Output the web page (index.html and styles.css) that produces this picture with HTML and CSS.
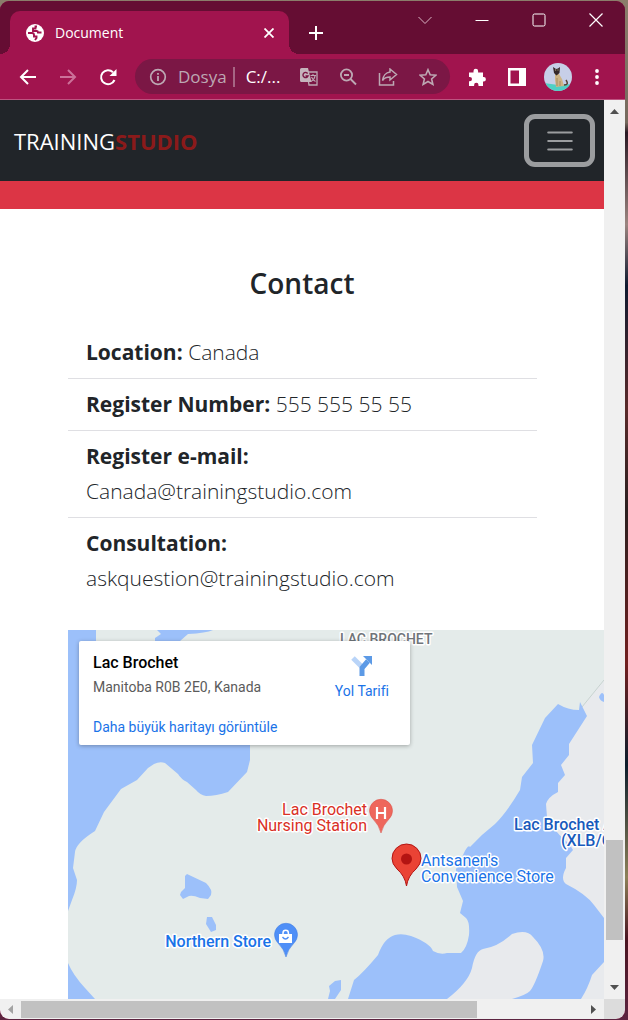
FILE: index.html
```html
<!DOCTYPE html>
<html lang="tr">
<head>
<meta charset="utf-8">
<meta name="viewport" content="width=device-width, initial-scale=1">
<title>Document</title>
<link rel="stylesheet" href="styles.css">
</head>
<body>
<div class="window">
  <div class="tabstrip">
    <div class="tab">
      <svg class="favicon" width="18" height="18" viewBox="0 0 18 18"><circle cx="9" cy="9" r="9" fill="#fff"/><path d="M11 2.500H9.500V4.500H7V7h3.500q1.500 0 1.500 1.500h3.500M2 9h4q2 0 2 2v1.500h2.500V14L9 16" fill="none" stroke="#a1144e" stroke-width="1.900"/></svg>
      <span class="tab-title">Document</span>
      <button class="icon-btn tab-close" aria-label="Close tab"><svg width="10" height="10" viewBox="0 0 10 10"><path d="M0.500 0.500l9 9m0-9l-9 9" stroke="#fff" stroke-width="1.800"/></svg></button>
    </div>
    <button class="icon-btn new-tab" aria-label="New tab"><svg width="14" height="14" viewBox="0 0 14 14"><path d="M7 0v14M0 7h14" stroke="#fff" stroke-width="2"/></svg></button>
    <div class="window-buttons">
      <button class="icon-btn" aria-label="Search tabs"><svg width="14" height="14" viewBox="0 0 14 14"><path d="M0.500 4l6.500 6.500L13.500 4" fill="none" stroke="#d9b5c4"/></svg></button>
      <button class="icon-btn" aria-label="Minimize"><svg width="14" height="14" viewBox="0 0 14 14"><path d="M0.500 7.500h13" stroke="#fff"/></svg></button>
      <button class="icon-btn" aria-label="Maximize"><svg width="14" height="14" viewBox="0 0 14 14"><rect x="1" y="1" width="12" height="12" rx="1.500" fill="none" stroke="#fff"/></svg></button>
      <button class="icon-btn" aria-label="Close"><svg width="14" height="14" viewBox="0 0 14 14"><path d="M0.500 0.500l13 13m0-13l-13 13" stroke="#fff" stroke-width="1.200"/></svg></button>
    </div>
  </div>
  <div class="toolbar">
    <div class="nav-buttons">
      <button class="icon-btn" aria-label="Back"><svg width="18" height="18" viewBox="0 0 18 18"><path d="M17 9H2M9 2L2 9l7 7" fill="none" stroke="#fff" stroke-width="2"/></svg></button>
      <button class="icon-btn" aria-label="Forward"><svg width="18" height="18" viewBox="0 0 18 18"><path d="M1 9h15M9 2l7 7-7 7" fill="none" stroke="#cc7199" stroke-width="2"/></svg></button>
      <button class="icon-btn" aria-label="Reload"><svg width="18" height="18" viewBox="0 0 18 18"><path d="M15.500 12A7 7 0 1 1 14 4.200" fill="none" stroke="#fff" stroke-width="2"/><path d="M17.500 1v7h-7z" fill="#fff"/></svg></button>
    </div>
    <div class="omnibox">
      <svg width="18" height="18" viewBox="0 0 18 18"><circle cx="9" cy="9" r="7.300" fill="none" stroke="#bda8b3" stroke-width="1.700"/><path d="M9 8v5M9 5v1.800" stroke="#bda8b3" stroke-width="1.800"/></svg>
      <label for="address">Dosya</label>
      <input id="address" type="text" value="C:/...">
      <div class="page-actions">
        <button class="icon-btn" aria-label="Translate"><svg width="18" height="18" viewBox="0 0 18 18"><path d="M7 4h10v13H9z" fill="none" stroke="#bda8b3" stroke-width="1.300"/><path d="M1.500 0H8l3.500 14H1.500A1.500 1.500 0 0 1 0 12.500v-11A1.500 1.500 0 0 1 1.500 0z" fill="#c5b3bc"/><path d="M7.700 5.500A2.600 2.600 0 1 0 8 8H5.500" fill="none" stroke="#7b1745" stroke-width="1.400"/><path d="M10.500 7.500h5.500M13 6v1.500M15 8c-.5 3-2 4.500-4 5.500M11.500 9c1 2.500 2 3.500 4 4.500" fill="none" stroke="#bda8b3" stroke-width="1.100"/></svg></button>
        <button class="icon-btn" aria-label="Zoom"><svg width="18" height="18" viewBox="0 0 18 18"><circle cx="7.500" cy="7" r="5.600" fill="none" stroke="#bda8b3" stroke-width="1.800"/><path d="M11.500 11l5.500 5.500M5 7h5" stroke="#bda8b3" stroke-width="1.900"/></svg></button>
        <button class="icon-btn" aria-label="Share"><svg width="20" height="18" viewBox="0 0 20 18"><path d="M1.500 5v12h14v-4M12 1l6.500 5.500L12 12V9c-3.500 0-6 1-7.500 3.500C5 8 8 4.500 12 4z" fill="none" stroke="#bda8b3" stroke-width="1.500"/></svg></button>
        <button class="icon-btn" aria-label="Bookmark"><svg width="18" height="18" viewBox="0 0 18 18"><path d="M9 1.700l2.200 5.100 5.600.5-4.200 3.700 1.300 5.400L9 13.500l-4.900 2.900L5.400 11 1.200 7.300l5.600-.5z" fill="none" stroke="#bda8b3" stroke-width="1.600"/></svg></button>
      </div>
    </div>
    <div class="extensions">
      <button class="icon-btn puzzle" aria-label="Extensions"><svg width="18" height="18" viewBox="0 0 18 18"><path d="M1 4.500h4.500V3a2.300 2.300 0 0 1 4.600 0v1.500H15V9h.7a2.200 2.200 0 0 1 0 4.400H15V18h-4.500v-1a2.200 2.200 0 0 0-4.400 0v1H1v-4.700h.8a2.200 2.200 0 0 0 0-4.400H1z" fill="#fff"/></svg></button>
      <button class="icon-btn" aria-label="Side panel"><svg width="18" height="18" viewBox="0 0 18 18"><path d="M0 0h18v18H0zM2.500 2.500v13H11v-13z" fill="#fff" fill-rule="evenodd"/></svg></button>
      <button class="icon-btn" aria-label="Profile"><svg width="28" height="28" viewBox="0 0 28 28"><defs><clipPath id="avatar"><circle cx="14" cy="14" r="14"/></clipPath></defs><g clip-path="url(#avatar)"><path d="M0 0h28v28H0z" fill="#c7cfe8"/><path d="M0 20l14 2 14-1v7H0z" fill="#4fd0c4"/><path d="M11 10l4 1 3 5 2 7-8 1-1-7z" fill="#cdb486"/><path d="M20 22c4 0 4-2 2-5" fill="none" stroke="#574236" stroke-width="1.500"/><path d="M13 15v8M16 18v5" stroke="#aa8c60"/><path d="M9 4l3 2 2-.5L16 4l-.5 6-3 2.500L10 10z" fill="#34282a"/><path d="M11 7h1.200M13.500 7h1" stroke="#c0b48a"/></g></svg></button>
      <button class="icon-btn" aria-label="Menu"><svg width="14" height="18" viewBox="0 0 14 18" fill="#fff"><circle cx="7" cy="3" r="1.900"/><circle cx="7" cy="9" r="1.900"/><circle cx="7" cy="15" r="1.900"/></svg></button>
    </div>
  </div>

  <div class="viewport">
    <div class="page">
      <header class="navbar">
        <a class="brand" href="#">TRAINING<b>STUDIO</b></a>
        <button class="toggler" aria-label="Toggle navigation"><svg width="32" height="32" viewBox="0 0 30 30"><path d="M4 7h22M4 15h22M4 23h22" stroke="#9b9d9f" stroke-width="2" stroke-linecap="round"/></svg></button>
      </header>
      <div class="red-band"></div>
      <main class="contact">
        <h1>Contact</h1>
        <ul class="details">
          <li><b>Location:</b> Canada</li>
          <li><b>Register Number:</b> 555 555 55 55</li>
          <li><b>Register e-mail:</b><br>Canada@trainingstudio.com</li>
          <li><b>Consultation:</b><br>askquestion@trainingstudio.com</li>
        </ul>
        <section class="map" aria-label="Lac Brochet">
          <svg class="map-canvas" viewBox="68 630 536 369" preserveAspectRatio="xMinYMin slice">
            <path class="land" d="M68 630h536v369H68z"/>
            <path class="town" d="M604 680L582 707 540 790 440 999H604z"/>
            <path d="M604 680L582 707" stroke="#c8d3d0" fill="none"/>
            <g class="water">
              <path d="M68 630H96V645H250V760L247 772 228 792 Q216 796 206 796 Q200 795 196 790 L187 782 Q181 779 178 774 L165 763Q160 761 154 764L148 768 137 780 121 789 104 812 95 831Q76 843 75 852L73 868 77 880Q77 888 72 900L68 911z"/>
              <path d="M157 630H213Q206 633 188 634L180 641H155L155 638 161 634z"/>
              <path d="M68 963Q73 975 85 988L95 999H68z"/>
              <path d="M185 876L187 874 206 883Q213 890 211 895L208 899 200 898Q193 895 189 896L183 899 180 895 181 892 185 888z"/>
              <path d="M207 917H212L216 925V930L211 932 206 924z"/>
              <path d="M328 999L330 991 329 986 335 981 341 980V990L335 999z"/>
              <path d="M558 704Q568 710 579 710L580 702 587 716 569 744V755L561 765 565 775 558 783V792Q548 797 546 804L547 817Q553 830 565 840Q570 844 573 850L566 858V868Q560 879 566 884Q586 894 594 905L604 918V962L592 975Q588 988 581 999H348L354 980Q363 973 378 955Q384 938 395 935Q402 933 411 936Q430 943 433 951Q440 955 447 953H461Q467 948 469 935Q470 922 466 918L460 913 463 901 457 887 456 869 463 855Q468 844 470 847Q482 834 495 824Q507 812 520 790L522 777 533 763 532 745 545 718z"/>
              <path d="M599 697Q602 690 604 695V702Q600 701 599 697z"/>
            </g>
            <path class="town" d="M447 999Q468 983 472 968Q475 951 483 949Q498 947 512 934Q527 929 533 937Q546 950 543 961Q535 985 530 991Q526 995 512 999z"/>
            <g class="labels">
              <text class="region" x="340" y="644">LAC BROCHET</text>
              <text class="health" x="367" y="815" text-anchor="end">Lac Brochet</text>
              <text class="health" x="367" y="831" text-anchor="end">Nursing Station</text>
              <text class="shop" x="421" y="866">Antsanen's</text>
              <text class="shop" x="421" y="882">Convenience Store</text>
              <text class="shop strong" x="271" y="947" text-anchor="end">Northern Store</text>
              <text class="airport strong" x="514" y="830">Lac Brochet A</text>
              <text class="airport strong" x="561" y="846">(XLB/C</text>
            </g>
            <path d="M381 833Q379 825 373 819A11.500 11.500 0 1 1 389 819Q383 825 381 833z" fill="#ee675c" stroke="#d94b43" stroke-width=".5"/>
            <path d="M377 807v12M385 807v12M377 813h8" stroke="#fff" stroke-width="2.200"/>
            <path d="M286 957Q284 949 278 943A11.500 11.500 0 1 1 294 943Q288 949 286 957z" fill="#4f8ff7" stroke="#3a78e0" stroke-width=".5"/>
            <path d="M279 934h13v9h-13z" fill="#fff"/><path d="M283 934v-1a2.700 2.700 0 0 1 5.400 0v1" fill="none" stroke="#fff" stroke-width="1.500"/><path d="M282.500 937q3 4 6 0" fill="none" stroke="#4f8ff7" stroke-width="1.300"/>
            <path d="M406.500 886Q405 876 397 869Q392 864 392 858.500A14.500 14.500 0 0 1 421 858.500Q421 864 416 869Q408 876 406.500 886z" fill="#ea4335" stroke="#b31412"/>
            <circle cx="406.500" cy="859" r="5.500" fill="#b31412"/>
          </svg>
          <div class="place-card">
            <div class="place">
              <strong>Lac Brochet</strong>
              <span>Manitoba R0B 2E0, Kanada</span>
              <a href="#">Daha büyük haritayı görüntüle</a>
            </div>
            <a class="directions" href="#">
              <svg width="22" height="22" viewBox="0 0 22 22"><path d="M2 3l8 8" stroke="#b9d4f8" stroke-width="5"/><path d="M11 21v-8l6-7" fill="none" stroke="#5c9ae6" stroke-width="5"/><path d="M12 1h9v9z" fill="#5c9ae6"/></svg>
              Yol Tarifi
            </a>
          </div>
        </section>
      </main>
    </div>
    <div class="scrollbar vertical">
      <svg width="9" height="5" viewBox="0 0 9 5"><path d="M0 5L4.500 0 9 5z" fill="#505050"/></svg>
      <div class="track"><div class="thumb"></div></div>
      <svg width="9" height="5" viewBox="0 0 9 5"><path d="M0 0L4.500 5 9 0z" fill="#505050"/></svg>
    </div>
    <div class="scrollbar horizontal">
      <svg width="5" height="9" viewBox="0 0 5 9"><path d="M5 0L0 4.500 5 9z" fill="#a3a3a3"/></svg>
      <div class="track"><div class="thumb"></div></div>
      <svg width="5" height="9" viewBox="0 0 5 9"><path d="M0 0L5 4.500 0 9z" fill="#505050"/></svg>
    </div>
    <div class="corner"></div>
  </div>
</div>
</body>
</html>
```
FILE: styles.css
```css
* { box-sizing: border-box; }

body {
  margin: 0;
  height: 100vh;
  padding: 1px 3px 1px 0;
  overflow: hidden;
  font-family: "Open Sans", "Noto Sans", sans-serif;
  color: #212529;
  background: linear-gradient(#8b7d6b 0, #75695d 12%, #2a1a24 13%, #9b8580 22%, #101a30 28%, #5a2a2a 40%, #2b2020 50%, #722020 65%, #0d1d2c 75%, #8d8158 86%, #4a1420 92%, #5c2440 100%);
}

.window {
  display: flex;
  flex-direction: column;
  height: 100%;
  border-radius: 9px;
  overflow: hidden;
  background: #a1144e;
}

.icon-btn {
  display: flex;
  align-items: center;
  justify-content: center;
  padding: 0;
  border: 0;
  background: none;
}

.tabstrip {
  display: flex;
  flex: none;
  height: 53px;
  padding-left: 10px;
  background: #650d33;
}

.tab {
  display: flex;
  align-items: center;
  width: 279px;
  height: 43px;
  margin-top: 10px;
  padding: 0 15px 0 16px;
  gap: 11px;
  border-radius: 10px 10px 0 0;
  background: #a1144e;
  position: relative;
}

.tab::before,
.tab::after {
  content: "";
  position: absolute;
  bottom: 0;
  width: 10px;
  height: 10px;
}

.tab::before {
  right: 100%;
  background: radial-gradient(circle at 0 0, #650d33 10px, #a1144e 10px);
}

.tab::after {
  left: 100%;
  background: radial-gradient(circle at 100% 0, #650d33 10px, #a1144e 10px);
}

.tab-title {
  flex: 1;
  font-size: 14px;
  color: #fff;
}

.new-tab {
  width: 54px;
  padding-top: 10px;
}

.window-buttons {
  display: flex;
  gap: 43px;
  height: 38px;
  margin-left: auto;
  padding-right: 22px;
}

.toolbar {
  display: flex;
  align-items: center;
  flex: none;
  height: 46px;
  padding: 0 21px 0 19px;
  border-bottom: 1px solid #bd5480;
}

.nav-buttons {
  display: flex;
  gap: 22px;
}

.omnibox {
  display: flex;
  align-items: center;
  flex: 1;
  min-width: 0;
  height: 35px;
  margin: 0 18px;
  padding: 0 13px 0 14px;
  border-radius: 18px;
  background: #7b1745;
  font-size: 17px;
}

.omnibox label {
  margin-left: 11px;
  color: #bda8b3;
}

.omnibox input {
  flex: 1;
  min-width: 0;
  width: 0;
  height: 20px;
  margin-left: 6px;
  padding: 0 0 0 11px;
  border: 0;
  border-left: 2px solid #a66684;
  background: none;
  color: #fff;
  font: inherit;
}

.page-actions {
  display: flex;
  gap: 21px;
}

.extensions {
  display: flex;
  align-items: center;
  gap: 18px;
}

.puzzle { margin-right: 4px; }

.viewport {
  display: grid;
  flex: 1;
  min-height: 0;
  grid-template: minmax(0, 1fr) 20px / minmax(0, 1fr) 21px;
}

.page {
  display: flex;
  flex-direction: column;
  overflow: hidden;
  background: #fff;
}

.navbar {
  display: flex;
  align-items: center;
  justify-content: space-between;
  padding: 14px 9px 14px 14px;
  background: #212529;
}

.brand {
  font-size: 22px;
  color: #fff;
  text-decoration: none;
}

.brand b { color: #8b1a1a; }

.toggler {
  display: flex;
  align-items: center;
  justify-content: center;
  width: 71px;
  height: 53px;
  padding: 0;
  border: 5px solid #9b9d9f;
  border-radius: 11px;
  background: none;
}

.red-band {
  flex: none;
  height: 28px;
  background: #dc3545;
}

.contact {
  display: flex;
  flex-direction: column;
  flex: 1;
  min-height: 0;
  padding: 54px 0 0 68px;
}

h1 {
  margin: 0 68px 24px 0;
  font-size: 28px;
  font-weight: 600;
  line-height: 40px;
  text-align: center;
}

.details {
  margin: 0 67px 26px 0;
  padding: 0;
  list-style: none;
  font-size: 21px;
  font-weight: 300;
  line-height: 35px;
}

.details li {
  padding: 8px 18px;
  border-bottom: 1px solid #dfdfe3;
}

.details li:last-child { border-bottom: 0; }
.details b { font-weight: 700; }

.map {
  position: relative;
  flex: 1;
  min-height: 0;
  overflow: hidden;
  font-family: Roboto, sans-serif;
}

.map-canvas {
  display: block;
  width: 100%;
  height: 100%;
}

.land { fill: #e4ebea; }
.town { fill: #e8eaed; }
.water { fill: #9cc0fa; }

.labels text {
  font-size: 16px;
  paint-order: stroke;
  stroke: #fff;
  stroke-width: 3px;
  stroke-linejoin: round;
}

.labels .region { font-size: 14px; font-weight: 500; fill: #70757a; }
.labels .health { fill: #d93025; }
.labels .shop { fill: #1a73e8; }
.labels .airport { fill: #185abc; }
.labels .strong { font-weight: 500; }

.place-card {
  position: absolute;
  top: 11px;
  left: 11px;
  display: flex;
  justify-content: space-between;
  width: 331px;
  padding: 12px 21px 8px 14px;
  border-radius: 2px;
  background: #fff;
  box-shadow: 0 1px 4px rgba(0, 0, 0, 0.3);
  font-size: 14px;
  line-height: 20px;
}

.place {
  display: flex;
  flex-direction: column;
}

.place strong {
  margin-bottom: 4px;
  font-size: 16px;
  font-weight: 500;
  color: #000;
}

.place span {
  margin-bottom: 20px;
  color: #5b5b5b;
}

.place-card a {
  color: #1a73e8;
  text-decoration: none;
}

.directions {
  display: flex;
  flex-direction: column;
  align-items: center;
  gap: 4px;
  padding-top: 2px;
}

.scrollbar {
  display: flex;
  align-items: center;
  background: #f0f0f0;
}

.scrollbar svg { flex: none; }

.track {
  display: flex;
  flex: 1;
}

.thumb { background: #c1c1c1; }

.vertical {
  flex-direction: column;
  padding: 9px 0;
}

.vertical .track {
  flex-direction: column;
  justify-content: flex-end;
  width: 17px;
  padding-bottom: 45px;
}

.vertical .thumb { height: 100px; }

.horizontal { padding: 0 8px; }

.horizontal .track {
  height: 17px;
  padding: 0 0 0 8px;
}

.horizontal .thumb { width: 80%; }

.corner { background: #dcdcdc; }
```
